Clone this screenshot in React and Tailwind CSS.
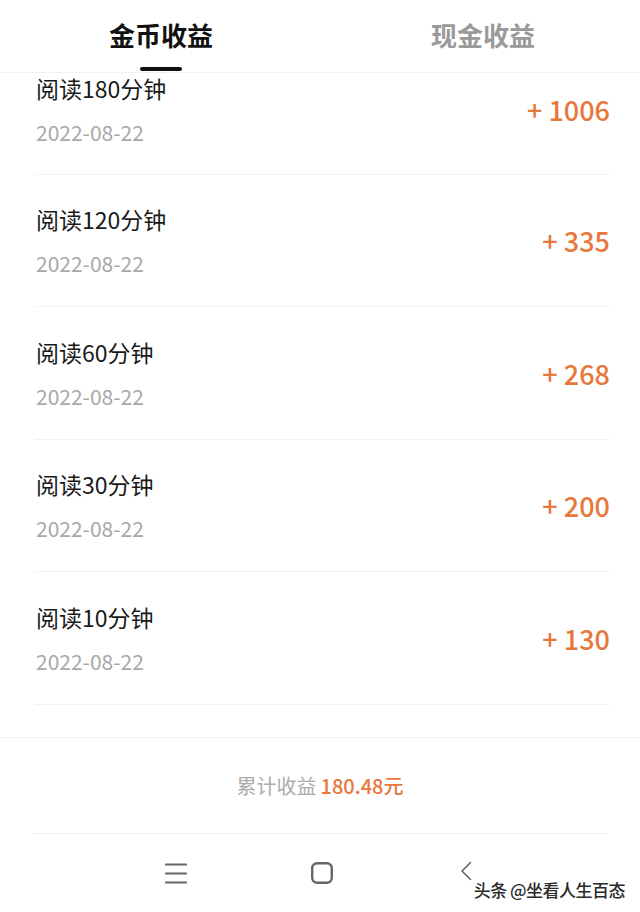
import React from "react";

const rows = [
  { t: "阅读180分钟", a: "+ 1006", first: true },
  { t: "阅读120分钟", a: "+ 335" },
  { t: "阅读60分钟", a: "+ 268" },
  { t: "阅读30分钟", a: "+ 200" },
  { t: "阅读10分钟", a: "+ 130" },
];

export default function App() {
  return (
    <div className="relative flex h-[912px] w-[640px] flex-col overflow-hidden bg-white font-['Noto_Sans_CJK_SC','Noto_Sans',sans-serif]">
      {/* Tabs */}
      <div className="grid h-[73px] shrink-0 grid-cols-2 border-b border-[#f0f0f0]">
        <div className="relative flex items-center justify-center">
          <span className="text-[26px] font-bold leading-none text-[#111] -mt-[2px] ml-[2px]">金币收益</span>
          <span className="absolute bottom-[1px] left-[140px] h-[4px] w-[42px] rounded-full bg-[#111]" />
        </div>
        <div className="flex items-center justify-center">
          <span className="text-[26px] font-bold leading-none text-[#9a9a9a] -mt-[2px] ml-[6px]">现金收益</span>
        </div>
      </div>

      {/* List */}
      <div className="flex-1">
        {rows.map((r, i) => (
          <div
            key={i}
            className={`ml-[35px] mr-[30px] flex items-center justify-between border-b border-[#f2f2f2] ${
              r.first ? "h-[102px] pt-[1px] pb-[30px]" : i % 2 === 1 ? "h-[132px]" : "h-[133px]"
            }`}
          >
            <div className="flex flex-col pl-[1px]">
              <span className="text-[23px] leading-[28px] text-[#1a1a1a]">{r.t}</span>
              <span className="mt-[17px] text-[21px] leading-[26px] text-[#a8a8a8]">2022-08-22</span>
            </div>
            <span className="text-[27px] font-medium leading-none text-[#e8773c]">{r.a}</span>
          </div>
        ))}
      </div>

      {/* Total */}
      <div className="flex h-[96px] shrink-0 items-center justify-center border-t border-[#f0f0f0]">
        <span className="text-[20px] leading-none text-[#ababab]">累计收益</span>
        <span className="ml-[4px] text-[20px] font-medium leading-none text-[#e8773c]">180.48元</span>
      </div>
      <div className="mx-[32px] h-px shrink-0 bg-[#eeeeee]" />

      {/* Nav */}
      <div className="flex h-[78px] shrink-0 items-center pl-[165px]">
        <svg width="22" height="21" viewBox="0 0 22 21" fill="none" stroke="#666" strokeWidth="2.2" strokeLinecap="round">
          <line x1="1" y1="1.5" x2="21" y2="1.5" />
          <line x1="1" y1="10.5" x2="21" y2="10.5" />
          <line x1="1" y1="19.5" x2="21" y2="19.5" />
        </svg>
        <svg className="ml-[124px]" width="22" height="22" viewBox="0 0 22 22" fill="none" stroke="#666" strokeWidth="2.4">
          <rect x="1.2" y="1.2" width="19.6" height="19.6" rx="5" />
        </svg>
        <svg className="ml-[127px] -mt-[4px]" width="13" height="20" viewBox="0 0 13 20" fill="none" stroke="#666" strokeWidth="1.6" strokeLinecap="round" strokeLinejoin="round">
          <path d="M10.5 1.5 L2 10 L10.5 18.5" />
        </svg>
      </div>

      {/* Watermark */}
      <div className="absolute bottom-[14px] right-[15px] text-[17px] font-medium leading-none tracking-[-0.5px] text-[#2a2a2a] [text-shadow:0_0_2px_#fff,0_0_2px_#fff,0_0_3px_#fff]">
        头条 @坐看人生百态
      </div>
    </div>
  );
}
